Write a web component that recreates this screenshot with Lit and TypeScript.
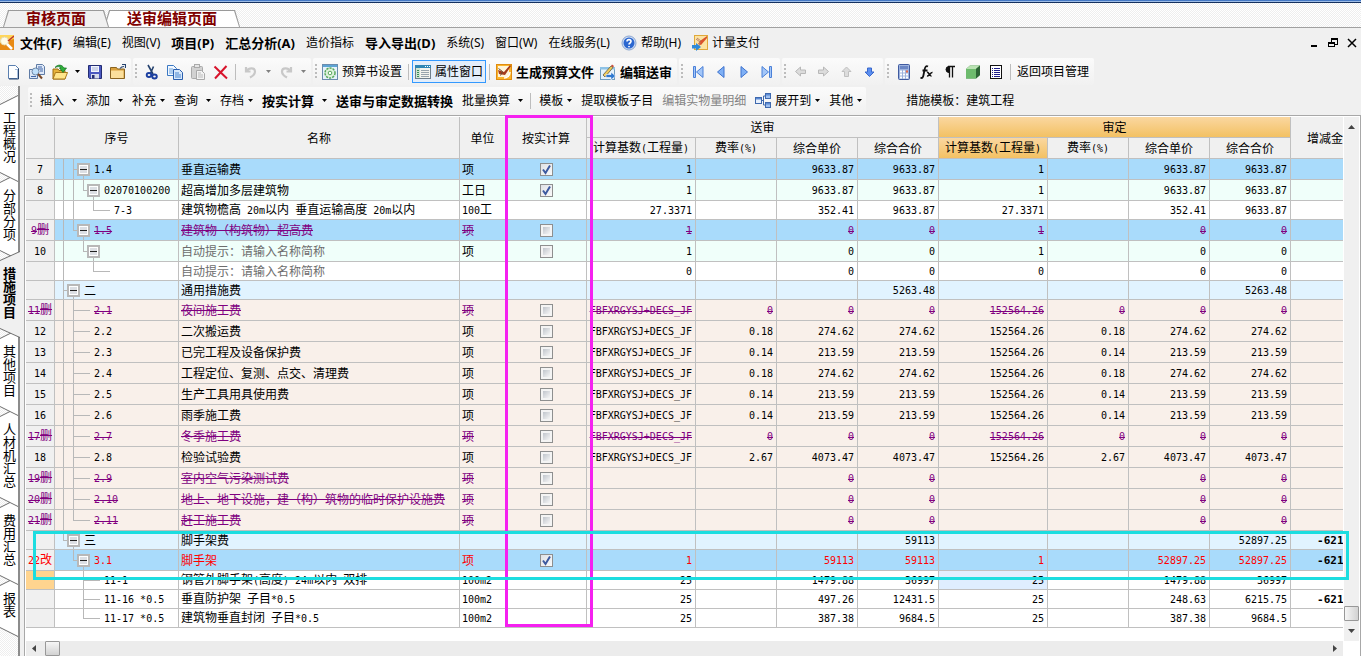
import { LitElement, html, css, svg, nothing } from "lit";
import type { TemplateResult, SVGTemplateResult } from "lit";
import { customElement } from "lit/decorators.js";
import { classMap } from "lit/directives/class-map.js";

/* ---------- icons, all on a 16 x 16 grid ---------- */
const ICONS: Record<string, SVGTemplateResult> = {
  app: svg`<rect x="0" y="0" width="16" height="15" fill="#f0a21c"/><path d="M0 9L16 3V15H0z" fill="#e88a14"/><path d="M0 0h16v4L0 8z" fill="#ffd65a"/><circle cx="6.500" cy="6" r="4" fill="#fffbe6" stroke="#e4d9b0"/><path d="M9 9l5 5" stroke="#fff" stroke-width="2.500"/><path d="M10 6l6-5" stroke="#c0392b" stroke-width="1.500"/>`,
  doc: svg`<path d="M2.500 1.500h7l3 3v10h-10z" fill="#fdfeff" stroke="#5a7fb0"/><path d="M9 1v4h4v10h-2V6H9z" fill="#a9c0de"/><path d="M12.500 4.500v10.500H3" fill="none" stroke="#27446f"/>`,
  find: svg`<path d="M7.500 .500h6l2 2v8h-8z" fill="#dfe9f8" stroke="#5f7ba5"/><path d="M9 3h4M9 5h5M11 7h3" stroke="#3f65a8"/><path d="M.500 5.500h8v9h-8z" fill="#dbe7f7" stroke="#5f7ba5"/><path d="M2 12.500h5" stroke="#3f65a8"/><circle cx="6.500" cy="7.500" r="3.500" fill="#bfe0fb" stroke="#6f88a8"/><path d="M9 10l4 4.500" stroke="#7a4a2a" stroke-width="2"/>`,
  open: svg`<path d="M1 5h5l1 1.500h6V15H1z" fill="#e6b23a" stroke="#9a6c12"/><path d="M3.500 8.500H15.500L13 15H1z" fill="#ffe58a" stroke="#a9781a"/><path d="M3 3.500C6 0 10 .500 12 4h2.500L11 8.500 7.500 4H9C8 2.500 6 2 3 3.500z" fill="#2fae3a" stroke="#137022" stroke-width=".7"/>`,
  save: svg`<path d="M1.500 1.500h13v13h-12l-1-1z" fill="#4a58c0" stroke="#232c72"/><rect x="4" y="2" width="8" height="6" fill="#f2f5fd"/><path d="M5 4h6M5 6h6" stroke="#a9b3d6"/><rect x="4" y="10" width="8" height="4.500" fill="#d5daea"/><rect x="5" y="11" width="2.500" height="3.500" fill="#232c72"/>`,
  folder: svg`<path d="M.500 3.500h6l1 1.500h7v9.500h-14z" fill="#d9a03c" stroke="#8a6420"/><path d="M1 6.500h12.500V14H1z" fill="#fbdf9c"/><path d="M10 4.500c1-1.500 2-2 4-2M12 .500h3.500V4" fill="none" stroke="#27446f" stroke-width="1.200"/>`,
  cut: svg`<path d="M4 1l5 9M9.500 2.500L6.500 9.500" stroke="#26436f" stroke-width="1.600"/><ellipse cx="5" cy="11" rx="2.300" ry="2" fill="none" stroke="#1b3fa0" stroke-width="1.900"/><ellipse cx="10.500" cy="12.500" rx="2.300" ry="2" fill="none" stroke="#1b3fa0" stroke-width="1.900"/>`,
  copy: svg`<path d="M.500 1.500h6l3 3v7h-9z" fill="#f2f8ff" stroke="#3a78c3"/><path d="M2 5h4M2 7h4M2 9h4" stroke="#6ba1dc"/><path d="M6.500 5.500h6l3 3v7h-9z" fill="#d6e8fb" stroke="#2a5fae"/><path d="M8 9h4M8 11h6M8 13h6" stroke="#4a86cf"/>`,
  paste: svg`<rect x="1.500" y="2.500" width="11" height="12" rx="1" fill="#d2d2d2" stroke="#aaa"/><rect x="4.500" y=".500" width="5" height="3" fill="#e6e6e6" stroke="#aaa"/><path d="M6.500 6.500h5l3 3v6h-8z" fill="#f3f3f3" stroke="#aaa"/><path d="M8 9h3M8 11h5M8 13h5" stroke="#bbb"/>`,
  del: svg`<path d="M1.500 2.500L14 14.500M13.500 2L2 14.500" stroke="#d8142c" stroke-width="2" fill="none"/>`,
  undo: svg`<path d="M3 3v4.500h4.500M3.500 7C6 3.500 12 3.500 12 7.500c0 2.500-2 4.500-5 6" fill="none" stroke="#c8c8c8" stroke-width="2.200"/>`,
  redo: svg`<path d="M13 3v4.500H8.500M12.500 7C10 3.500 4 3.500 4 7.500c0 2.500 2 4.500 5 6" fill="none" stroke="#c8c8c8" stroke-width="2.200"/>`,
  gear: svg`<rect x=".500" y=".500" width="15" height="15" fill="#e6f2fb" stroke="#6b8cae"/><rect x="1" y="1" width="14" height="2" fill="#5da4d4"/><circle cx="8" cy="9" r="5" fill="#dff2dd" stroke="#58a85c" stroke-width="1.500" stroke-dasharray="2.200 1"/><circle cx="8" cy="9" r="1.800" fill="#fff" stroke="#58a85c"/>`,
  panel: svg`<rect x=".500" y="1.500" width="15" height="13" fill="#f3f3ee" stroke="#6f7f8c"/><rect x="0" y="1" width="16" height="3" fill="#2f86b5"/><path d="M10 2.500h1M12 2.500h1M14 2.500h1" stroke="#fff"/><rect x="1" y="4" width="4" height="10" fill="#cfe6d2"/><path d="M2 6.500h2M2 8.500h2M2 10.500h2M2 12.500h2" stroke="#3b8a58"/><path d="M6 6.500h8M6 8.500h8M6 10.500h8M6 12.500h8" stroke="#98a4ad"/>`,
  make: svg`<rect x=".500" y=".500" width="15" height="15" fill="#fbb52c" stroke="#e08c10"/><rect x="2" y="2" width="11" height="11" fill="#fff4d8"/><path d="M2 6l6 2 6-7 1 1-6 9-6-1z" fill="#a43b1c"/><path d="M2.500 4.500l4 3-2 4" fill="none" stroke="#6a4b32"/><path d="M8 14c3 0 6-2 6-6" fill="none" stroke="#fff" stroke-width="1.500"/>`,
  edit: svg`<rect x=".500" y="3.500" width="14" height="12" fill="#e5f3fb" stroke="#6f9dbf"/><rect x="0" y="3" width="15" height="2.500" fill="#8fc3e6"/><path d="M3 11L11 2l2 1.500L5 13z" fill="#f0cc5a" stroke="#5c5c46" stroke-width=".800"/><path d="M11 2l1-1.500 2 1.500-1 1.500z" fill="#c94a3a"/><path d="M6 10.500h5V8l4.500 4-4.500 4v-2.500H6z" fill="#2f7ad0" stroke="#fff" stroke-width=".600"/>`,
  first: svg`<path d="M3.500 2.500h2v11h-2zM13 2.500v11L6.500 8z" fill="#a3c6f8" stroke="#4a80d8"/>`,
  prev: svg`<path d="M11 2.500v11L4.500 8z" fill="#7fb0f5" stroke="#3c72cf"/>`,
  next: svg`<path d="M5 2.500v11L11.500 8z" fill="#7fb0f5" stroke="#3c72cf"/>`,
  last: svg`<path d="M10.500 2.500h2v11h-2zM3 2.500v11L9.500 8z" fill="#a3c6f8" stroke="#4a80d8"/>`,
  left: svg`<path d="M2.500 7.500L7.500 3v3h5v3.500h-5V12z" fill="#dcdcdc" stroke="#b8b8b8"/>`,
  right: svg`<path d="M12.500 7.500L7.500 3v3h-5v3.500h5V12z" fill="#dcdcdc" stroke="#b8b8b8"/>`,
  up: svg`<path d="M7.500 3L12 7.500H9.500v5h-4v-5H3z" fill="#dcdcdc" stroke="#c0c0c0"/>`,
  down: svg`<path d="M7.500 12.500L3 8h2.500V4h4v4H12z" fill="#5b8ff0" stroke="#3a68cc"/>`,
  calc: svg`<rect x="2.500" y=".500" width="11" height="15" rx="1" fill="#9db2dd" stroke="#3f5aa0"/><rect x="4" y="2" width="8" height="3" fill="#6a86c4"/><path d="M4 7.500h2M7 7.500h2M4 10.500h2M7 10.500h2M10 10.500h2M4 13.500h2M7 13.500h2M10 13.500h2" stroke="#fff" stroke-width="2"/><path d="M10 7.500h2" stroke="#e66a4a" stroke-width="2"/>`,
  fx: svg`<path d="M9 2.500C7 1.500 6 3 5.500 6L4.500 11c-.500 3-1.500 3.500-3 2.500M3.500 6.500h5" fill="none" stroke="#111" stroke-width="1.800"/><path d="M8 8.500c2-1 2 4 4.500 3.500M13.500 8.500c-2-.500-3 4-5.500 3.500" fill="none" stroke="#111" stroke-width="1.600"/>`,
  para: svg`<path d="M7 2.500a3 3 0 000 6z" fill="#111" stroke="#111"/><path d="M7.500 2v11.500M10.500 2v11.500M6 2.500h7" stroke="#111" stroke-width="1.300"/>`,
  cube: svg`<path d="M1 5l4-3.500h10V11l-4 3.500H1z" fill="#3f8a46"/><path d="M1 5l4-3.500h10L11 5z" fill="#b9e2b2"/><path d="M1 5h10v9.500H1z" fill="#6dbb6d"/><path d="M11 5l4-3.500V11l-4 3.500z" fill="#2c6535"/>`,
  list: svg`<g shape-rendering="crispEdges"><rect x="2.500" y="1.500" width="11" height="13" fill="#fff" stroke="#111"/><path d="M4 4.500h1M6 4.500h6M4 6.500h1M6 6.500h6M4 8.500h1M6 8.500h6M4 10.500h1M6 10.500h6M4 12.500h1M6 12.500h6" stroke="#20208c"/></g>`,
  help: svg`<circle cx="8" cy="8" r="7" fill="#cfdcf0" stroke="#8aa6d2"/><circle cx="8" cy="8" r="5.500" fill="#2a66d0"/><path d="M6 6.500C6 4 10 4 10 6.500 10 8 8 8 8 9.500M8 11v1.300" fill="none" stroke="#fff" stroke-width="1.600"/>`,
  pay: svg`<rect x="2.500" y=".500" width="13" height="14" fill="#fce3a2" stroke="#e0a93a"/><path d="M8 6L15 1v2l-6 7-3-1z" fill="#d9532c"/><path d="M4 4l4 3-1 4M5 3l4 3" fill="none" stroke="#b9826a"/><path d="M0 10h4V8l5 4-5 4v-2.500H0z" fill="#2f8ad8"/>`,
  expand: svg`<rect x=".500" y="4.500" width="6" height="6" fill="#e8f1fd" stroke="#3f69ae"/><rect x="1" y="5" width="5" height="1.500" fill="#5b8ad4"/><rect x="10.500" y=".500" width="5" height="5" fill="#9fc0f0" stroke="#3f69ae"/><rect x="11" y="1" width="4" height="1.500" fill="#5b8ad4"/><rect x="10.500" y="9.500" width="5" height="5" fill="#9fc0f0" stroke="#3f69ae"/><rect x="11" y="10" width="4" height="1.500" fill="#5b8ad4"/><path d="M7 7.500h1.500M8.500 3v9M8.500 3H10M8.500 12H10" fill="none" stroke="#3f69ae"/>`,
};

const icon = (name: string) =>
  html`<svg class="ico" viewBox="0 0 16 16" width="16" height="16" aria-hidden="true">${ICONS[name]}</svg>`;

const caret = html`<svg class="caret" viewBox="0 0 5 3" width="5" height="3" aria-hidden="true"><path d="M0 0h5L2.500 3z" fill="currentColor"/></svg>`;

/* Latin runs use a half-width face beside the full-width characters. */
const mixed = (text: string) =>
  text
    .split(/([\x20-\x7e]+)/)
    .map((part, i) => (part === "" ? nothing : html`<span class=${i % 2 ? "latin" : "han"}>${part}</span>`));

/* ---------- grid data ---------- */
interface Tree {
  full: number[];
  end?: number;
  from?: number;
  box?: number;
  leaf?: number;
  stem?: boolean;
}
interface Row {
  idx: string;
  code: string;
  name: string;
  unit: string;
  check?: boolean;
  sent: string[];
  fixed: string[];
  diff?: string;
  tone: string;
  state?: "gone" | "edited";
  hint?: boolean;
  current?: boolean;
  tree: Tree;
}

const COLS = [29, 124, 281, 46, 81, 109, 81, 81, 81, 109, 81, 81, 81, 81];
const SHORT_TONES = ["plain", "group"];
const FEE = "FBFXRGYSJ+DECS_JF";

const fee = (idx: string, code: string, name: string, rate: string, price: string, last = false): Row => {
  const gone = price === "0";
  return {
    idx: gone ? `${idx}删` : idx,
    code,
    name,
    unit: "项",
    check: false,
    sent: rate ? [FEE, rate, price, price] : ["", "", price, price],
    fixed: rate ? ["152564.26", rate, price, price] : ["", "", price, price],
    tone: "fee",
    state: gone ? "gone" : undefined,
    tree: last ? { full: [8], end: 18, from: 18, leaf: 35 } : { full: [8, 18], from: 18, leaf: 35 },
  };
};

const ROWS: Row[] = [
  { idx: "7", code: "1.4", name: "垂直运输费", unit: "项", check: true, sent: ["1", "", "9633.87", "9633.87"], fixed: ["1", "", "9633.87", "9633.87"], tone: "section", tree: { full: [8, 18], from: 18, box: 28, stem: true } },
  { idx: "8", code: "02070100200", name: "超高增加多层建筑物", unit: "工日", check: true, sent: ["1", "", "9633.87", "9633.87"], fixed: ["1", "", "9633.87", "9633.87"], tone: "mint", tree: { full: [8, 18], end: 28, from: 28, box: 38, stem: true } },
  { idx: "", code: "7-3", name: "建筑物檐高 20m以内 垂直运输高度 20m以内", unit: "100工", sent: ["27.3371", "", "352.41", "9633.87"], fixed: ["27.3371", "", "352.41", "9633.87"], tone: "plain", tree: { full: [8, 18], end: 38, from: 38, leaf: 55 } },
  { idx: "9删", code: "1.5", name: "建筑物（构筑物）超高费", unit: "项", check: false, sent: ["1", "", "0", "0"], fixed: ["1", "", "0", "0"], tone: "section", state: "gone", tree: { full: [8], end: 18, from: 18, box: 28, stem: true } },
  { idx: "10", code: "", name: "自动提示：请输入名称简称", unit: "项", check: false, sent: ["1", "", "0", "0"], fixed: ["1", "", "0", "0"], tone: "mint", hint: true, tree: { full: [8], end: 28, from: 28, box: 38, stem: true } },
  { idx: "", code: "", name: "自动提示：请输入名称简称", unit: "", sent: ["0", "", "0", "0"], fixed: ["0", "", "0", "0"], tone: "plain", hint: true, tree: { full: [8], end: 38, from: 38, leaf: 55 } },
  { idx: "", code: "二", name: "通用措施费", unit: "", sent: ["", "", "", "5263.48"], fixed: ["", "", "", "5263.48"], tone: "group", tree: { full: [8], from: 8, box: 18, stem: true } },
  fee("11", "2.1", "夜间施工费", "0", "0"),
  fee("12", "2.2", "二次搬运费", "0.18", "274.62"),
  fee("13", "2.3", "已完工程及设备保护费", "0.14", "213.59"),
  fee("14", "2.4", "工程定位、复测、点交、清理费", "0.18", "274.62"),
  fee("15", "2.5", "生产工具用具使用费", "0.14", "213.59"),
  fee("16", "2.6", "雨季施工费", "0.14", "213.59"),
  fee("17", "2.7", "冬季施工费", "0", "0"),
  fee("18", "2.8", "检验试验费", "2.67", "4073.47"),
  fee("19", "2.9", "室内空气污染测试费", "", "0"),
  fee("20", "2.10", "地上、地下设施，建（构）筑物的临时保护设施费", "", "0"),
  fee("21", "2.11", "赶工施工费", "", "0", true),
  { idx: "", code: "三", name: "脚手架费", unit: "", sent: ["", "", "", "59113"], fixed: ["", "", "", "52897.25"], diff: "-6215.75", tone: "group", tree: { full: [], end: 8, from: 8, box: 18, stem: true } },
  { idx: "22改", code: "3.1", name: "脚手架", unit: "项", check: true, sent: ["1", "", "59113", "59113"], fixed: ["1", "", "52897.25", "52897.25"], diff: "-6215.75", tone: "section", state: "edited", tree: { full: [], end: 18, from: 18, box: 28, stem: true } },
  { idx: "", code: "11-1", name: "钢管外脚手架(高度) 24m以内 双排", unit: "100m2", sent: ["25", "", "1479.88", "36997"], fixed: ["25", "", "1479.88", "36997"], tone: "plain", current: true, tree: { full: [28], from: 28, leaf: 45 } },
  { idx: "", code: "11-16 *0.5", name: "垂直防护架 子目*0.5", unit: "100m2", sent: ["25", "", "497.26", "12431.5"], fixed: ["25", "", "248.63", "6215.75"], diff: "-6215.75", tone: "plain", tree: { full: [28], from: 28, leaf: 45 } },
  { idx: "", code: "11-17 *0.5", name: "建筑物垂直封闭 子目*0.5", unit: "100m2", sent: ["25", "", "387.38", "9684.5"], fixed: ["25", "", "387.38", "9684.5"], tone: "plain", tree: { full: [], end: 28, from: 28, leaf: 45 } },
];

const SUB_HEADS = ["计算基数(工程量)", "费率(%)", "综合单价", "综合合价"];

@customElement("cost-grid")
export class CostGrid extends LitElement {
  static styles = css`
    :host {
      display: block;
      font: 12px/16px "Noto Sans CJK SC", sans-serif;
      color: #000;
    }
    table {
      width: 100%;
      min-width: 1346px;
      table-layout: fixed;
      border-collapse: separate;
      border-spacing: 0;
    }
    th,
    td {
      box-sizing: border-box;
      height: 21px;
      padding: 0;
      border-right: 1px solid #c0c0c0;
      border-bottom: 1px solid #c0c0c0;
      font-weight: normal;
      white-space: nowrap;
      overflow: hidden;
    }
    th {
      background: #f0f0f0;
      text-align: center;
    }
    th.hot {
      background: linear-gradient(#fad7a0, #f3c163);
    }
    .latin {
      font-family: "DejaVu Sans Mono", monospace;
      font-size: 10px;
      white-space: pre;
    }
    .short td,
    .short th {
      height: 19px;
    }
    .section td {
      background: #a9dbfb;
    }
    .mint td {
      background: #f0fffa;
    }
    .group td {
      background: #e1f3ff;
    }
    .fee td {
      background: #f9f0ea;
    }
    .plain td {
      background: #fff;
    }
    .gone td,
    .gone th {
      color: #800080;
    }
    .gone .latin,
    .gone .han {
      text-decoration: line-through;
    }
    .edited td,
    .edited th {
      color: #f00;
    }
    td.hint {
      color: #6d6d6d;
    }
    .current th {
      background: #ffd48f;
    }
    .current td.focus {
      background: #dfeeff;
    }
    td.left {
      padding-left: 2px;
    }
    td.num {
      padding-right: 3px;
      text-align: right;
    }
    td.check {
      text-align: center;
    }
    tbody td.diff {
      padding-right: 1px;
      text-align: right;
      color: #000;
    }
    .diff .latin {
      font-size: 11px;
      font-weight: bold;
    }
    .tree {
      display: flex;
      align-items: center;
    }
    .tree svg {
      display: block;
      flex: none;
    }
    .tree .cell-text {
      margin-left: 4px;
    }
    .toggle {
      border: 0;
      padding: 0;
      background: none;
      flex: none;
    }
    input {
      appearance: none;
      display: block;
      box-sizing: border-box;
      width: 13px;
      height: 13px;
      margin: 0 auto;
      border: 1px solid #8e8f8f;
      background: linear-gradient(135deg, #c0c5cc, #f6f6f6) center / 7px 7px no-repeat, #f4f4f4;
    }
    input:checked {
      background: url("data:image/svg+xml,%3Csvg xmlns='http://www.w3.org/2000/svg' viewBox='0 0 11 11'%3E%3Cpath d='M2 5.500L4.500 9L9 1.500' fill='none' stroke='%233c5aa0' stroke-width='2'/%3E%3C/svg%3E") center / 11px 11px no-repeat, linear-gradient(135deg, #dfe2e6, #fafafa);
    }
  `;

  private tree(row: Row, h: number) {
    const t = row.tree;
    const mid = Math.floor(h / 2);
    const stop = t.box !== undefined ? t.box - 6 : t.leaf!;
    let d = t.full.map((x) => `M${x + 0.5} 0V${h}`).join("");
    if (t.end !== undefined) d += `M${t.end + 0.5} 0V${mid + 0.5}`;
    d += `M${t.from! + 0.5} ${mid + 0.5}H${stop}`;
    return html`<div class="tree">
      <svg width=${stop} height=${h} shape-rendering="crispEdges" aria-hidden="true"><path d=${d} fill="none" stroke="#b8b8b8" /></svg>
      ${t.box !== undefined
        ? html`<button class="toggle" aria-label="折叠">
            <svg width="13" height=${h} shape-rendering="crispEdges">
              <path d="M6.500 ${mid + 6}V${h}" stroke="#b8b8b8" />
              <rect x="1" y=${mid - 5} width="11" height="11" fill="#fff" stroke="#b8b8b8" stroke-width="2" />
              <rect x="3" y=${mid - 3} width="7" height="7" fill="#dcdfe4" />
              <path d="M3 ${mid + 0.5}H10" stroke="#222" />
            </svg>
          </button>`
        : nothing}
      <span class="cell-text">${mixed(row.code)}</span>
    </div>`;
  }

  private nums(values: string[], focus: boolean) {
    return values.map(
      (v, i) => html`<td class=${classMap({ num: true, focus: focus && i === 0 })}>${mixed(v)}</td>`,
    );
  }

  private row(row: Row) {
    const short = SHORT_TONES.includes(row.tone);
    const classes = { [row.tone]: true, short, gone: row.state === "gone", edited: row.state === "edited", current: !!row.current };
    return html`<tr class=${classMap(classes)}>
      <th scope="row">${mixed(row.idx)}</th>
      <td>${this.tree(row, short ? 18 : 20)}</td>
      <td class=${classMap({ left: true, hint: !!row.hint })}>${mixed(row.name)}</td>
      <td class="left">${mixed(row.unit)}</td>
      <td class="check">
        ${row.check === undefined ? nothing : html`<input type="checkbox" aria-label="按实计算 ${row.name}" .checked=${row.check} />`}
      </td>
      ${this.nums(row.sent, false)} ${this.nums(row.fixed, true)}
      <td class="diff">${mixed(row.diff ?? "")}</td>
    </tr>`;
  }

  render() {
    return html`<table>
      <colgroup>
        ${COLS.map((w) => html`<col style="width:${w}px" />`)}
      </colgroup>
      <thead>
        <tr>
          <th rowspan="2"></th>
          <th rowspan="2">序号</th>
          <th rowspan="2">名称</th>
          <th rowspan="2">单位</th>
          <th rowspan="2">按实计算</th>
          <th colspan="4">送审</th>
          <th colspan="4" class="hot">审定</th>
          <th rowspan="2">增减金额</th>
        </tr>
        <tr>
          ${SUB_HEADS.map((t) => html`<th>${mixed(t)}</th>`)}
          ${SUB_HEADS.map((t, i) => html`<th class=${classMap({ hot: i === 0 })}>${mixed(t)}</th>`)}
        </tr>
      </thead>
      <tbody>
        ${ROWS.map((r) => this.row(r))}
      </tbody>
    </table>`;
  }
}

/* ---------- toolbars ---------- */
const ib = (name: string, label: string) => html`<button class="ib" aria-label=${label}>${icon(name)}</button>`;
const drop = (label: string, dim = false) =>
  html`<button class=${classMap({ drop: true, dim })} aria-label=${label}>${caret}</button>`;
const grip = html`<span class="grip"></span>`;
const sep = html`<span class="sep"></span>`;
const labelled = (name: string, label: string, cls = "") =>
  html`<button class="lb ${cls}">${icon(name)}<span>${label}</span></button>`;
const cmd = (label: string, opts: { bold?: boolean; caret?: "near" | "far"; icon?: string; off?: boolean } = {}): TemplateResult =>
  html`<button class=${classMap({ cmd: true, bold: !!opts.bold, far: opts.caret === "far" })} ?disabled=${!!opts.off}>
    ${opts.icon ? icon(opts.icon) : nothing}<span>${label}</span>${opts.caret ? caret : nothing}
  </button>`;

const MENU: { text: string; bold?: boolean; icon?: string }[] = [
  { text: "文件(F)", bold: true },
  { text: "编辑(E)" },
  { text: "视图(V)" },
  { text: "项目(P)", bold: true },
  { text: "汇总分析(A)", bold: true },
  { text: "造价指标" },
  { text: "导入导出(D)", bold: true },
  { text: "系统(S)" },
  { text: "窗口(W)" },
  { text: "在线服务(L)" },
  { text: "帮助(H)", icon: "help" },
  { text: "计量支付", icon: "pay" },
];

const RAIL = ["工程概况", "分部分项", "措施项目", "其他项目", "人材机汇总", "费用汇总", "报表"];

@customElement("app-root")
export class AppRoot extends LitElement {
  static styles = css`
    :host {
      display: flex;
      flex-direction: column;
      height: 100vh;
      overflow: hidden;
      background: #f0f0f0;
      color: #000;
      font: 12px/16px "Noto Sans", "Noto Sans CJK SC", sans-serif;
    }
    button {
      border: 0;
      padding: 0;
      margin: 0;
      background: none;
      color: inherit;
      font: inherit;
      white-space: nowrap;
    }
    svg {
      display: block;
      flex: none;
    }
    .title-edge {
      flex: none;
      height: 3px;
      background: linear-gradient(#4377c4 1px, #9dbce6 1px 2px, #14305f 2px);
    }
    .dots {
      background: repeating-conic-gradient(#ffffff 0 25%, #eeeeee 0 50%) 0 0 / 2px 2px;
    }
    .pages {
      flex: none;
      display: flex;
      align-items: flex-end;
      box-sizing: border-box;
      height: 25px;
      padding-left: 3px;
      border-bottom: 1px solid #a0a0a0;
    }
    .page {
      position: relative;
      isolation: isolate;
      height: 17px;
      padding: 0 23px;
      background: #9a9a9a;
      clip-path: polygon(5px 0, calc(100% - 5px) 0, 100% 100%, 0 100%);
      color: #800000;
      font-size: 15px;
      font-weight: bold;
      line-height: 17px;
    }
    .page::before {
      content: "";
      position: absolute;
      z-index: -1;
      inset: 1px 1px 0;
      background: #fff;
      clip-path: polygon(5px 0, calc(100% - 5px) 0, 100% 100%, 0 100%);
    }
    .page.on::before {
      background: #f0f0f0;
    }
    .page + .page {
      margin-left: -5px;
    }
    .page.on {
      z-index: 1;
    }
    .menu {
      flex: none;
      display: flex;
      align-items: center;
      gap: 11px;
      height: 30px;
    }
    .logo {
      margin-left: -2px;
      margin-right: -5px;
    }
    .item {
      display: flex;
      align-items: center;
      gap: 4px;
    }
    .bold {
      font-size: 13px;
      font-weight: bold;
    }
    .win {
      display: flex;
      align-items: center;
      gap: 9px;
      margin-left: auto;
      padding-right: 4px;
    }
    .bar {
      flex: none;
      display: flex;
      align-items: flex-start;
      gap: 2px;
      height: 28px;
    }
    .set {
      display: flex;
      align-items: center;
      height: 27px;
      padding-right: 2px;
      border-radius: 2px;
      background: linear-gradient(#fbfbfb, #f1f1f1);
    }
    .set.clip {
      margin-left: -5px;
    }
    .grip {
      width: 7px;
      height: 15px;
      background: linear-gradient(#bcbcbc, #bcbcbc) 2px 0 / 2px 2px no-repeat,
        linear-gradient(#bcbcbc, #bcbcbc) 2px 4px / 2px 2px no-repeat,
        linear-gradient(#bcbcbc, #bcbcbc) 2px 8px / 2px 2px no-repeat,
        linear-gradient(#bcbcbc, #bcbcbc) 2px 12px / 2px 2px no-repeat;
    }
    .sep {
      width: 1px;
      height: 16px;
      margin: 0 3px;
      background: #bdbdbd;
    }
    .ib {
      display: flex;
      justify-content: center;
      width: 23px;
    }
    .drop {
      display: flex;
      justify-content: center;
      align-items: center;
      width: 12px;
      height: 16px;
    }
    .dim {
      color: #808080;
    }
    .lb {
      display: flex;
      align-items: center;
      gap: 4px;
      height: 23px;
      padding: 0 2px;
      border: 1px solid transparent;
    }
    .set > .grip + .lb {
      margin-left: -1px;
    }
    .lb.on {
      border-color: #3399ff;
      background: #e4eefa;
    }
    .bar.second {
      height: 29px;
      align-items: center;
      padding-left: 4px;
    }
    .bar.second .set {
      padding-right: 0;
    }
    .cmd {
      display: flex;
      align-items: center;
      gap: 4px;
      height: 22px;
      padding: 0 4px 0 5px;
    }
    .cmd.far {
      gap: 8px;
    }
    .cmd:disabled {
      color: #838383;
    }
    .template {
      margin-left: 38px;
    }
    .body {
      position: relative;
      flex: 1;
      display: flex;
      min-height: 0;
    }
    .rail {
      flex: none;
      display: flex;
      flex-direction: column;
      align-items: flex-start;
      box-sizing: border-box;
      width: 20px;
      padding-top: 9px;
      border-right: 2px solid #8c8c8c;
    }
    .side {
      position: relative;
      isolation: isolate;
      flex: none;
      box-sizing: border-box;
      width: 18px;
      margin-bottom: -9px;
      padding: 16px 0 19px;
      background: #6e6e6e;
      clip-path: polygon(0 9px, 100% 0, 100% 100%, 0 calc(100% - 9px));
      font-family: "Noto Sans CJK SC", sans-serif;
      font-size: 13px;
      line-height: 18px;
      writing-mode: vertical-rl;
    }
    .side::before {
      content: "";
      position: absolute;
      z-index: -1;
      inset: 0;
      background: #fff;
      clip-path: polygon(0 10px, 100% 1px, 100% calc(100% - 1px), 0 calc(100% - 10px));
    }
    .side.on {
      width: 20px;
      padding-right: 2px;
      font-weight: bold;
    }
    .side.on::before {
      background: #f0f0f0;
    }
    .main {
      flex: 1;
      display: flex;
      flex-direction: column;
      min-width: 0;
      padding-left: 4px;
    }
    .frame {
      flex: 1;
      display: flex;
      flex-direction: column;
      min-height: 0;
      padding: 1px 1px 0;
      border: solid #a8a8a8;
      border-width: 1px 1px 0;
      background: #fff;
    }
    .view {
      flex: 1;
      display: flex;
      min-height: 0;
    }
    cost-grid {
      flex: 1;
      min-width: 0;
      overflow: hidden;
    }
    .vscroll {
      flex: none;
      display: flex;
      flex-direction: column;
      align-items: center;
      justify-content: space-between;
      width: 15px;
      padding: 8px 0;
      margin-left: 1px;
      background: #f0f0f0;
    }
    .vscroll .low {
      display: flex;
      flex-direction: column;
      align-items: center;
      gap: 8px;
    }
    .thumb {
      box-sizing: border-box;
      width: 15px;
      height: 15px;
      border: 1px solid #989898;
      border-radius: 1px;
      background: linear-gradient(90deg, #f6f6f6, #d2d2d2);
    }
    .hscroll {
      flex: none;
      display: flex;
      align-items: center;
      height: 15px;
      margin-right: 16px;
      padding: 0 6px;
      background: #ececec;
    }
    .hscroll .thumb {
      margin-left: 9px;
      margin-right: auto;
      background: linear-gradient(#f6f6f6, #d2d2d2);
    }
    .mark {
      position: absolute;
      box-sizing: border-box;
      pointer-events: none;
    }
    .mark.column {
      left: 505px;
      top: 29px;
      width: 88px;
      height: 512px;
      border: 3px solid #f520f0;
    }
    .mark.row {
      left: 33px;
      right: 12px;
      top: 445px;
      height: 49px;
      border: 3px solid #1cdde0;
    }
  `;

  render() {
    return html`
      <div class="title-edge"></div>
      <div class="pages dots">
        <button class="page on">审核页面</button>
        <button class="page">送审编辑页面</button>
      </div>
      <nav class="menu">
        <span class="logo">${icon("app")}</span>
        ${MENU.map(
          (m) => html`<button class=${classMap({ item: true, bold: !!m.bold })}>${m.icon ? icon(m.icon) : nothing}<span>${m.text}</span></button>`,
        )}
        <span class="win">
          <button aria-label="最小化"><svg width="10" height="10" shape-rendering="crispEdges"><path d="M2 8h6" stroke="#000" stroke-width="2" /></svg></button>
          <button aria-label="还原"><svg width="10" height="10" shape-rendering="crispEdges"><path d="M3 1h7M3.500 1v3M9.500 1v6M10 6.500H7M0 5h7M.500 4v5M6.500 4v5M0 8.500h7" fill="none" stroke="#000" /><path d="M3 1h7M0 5h7" stroke="#000" stroke-width="2" /></svg></button>
          <button aria-label="关闭"><svg width="10" height="10"><path d="M1 1l8 8M9 1L1 9" stroke="#000" stroke-width="1.500" /></svg></button>
        </span>
      </nav>
      <div class="bar">
        <div class="set clip">
          ${grip}${ib("doc", "新建")}${ib("find", "查找")}${ib("open", "打开")}${drop("打开选项")}${ib("save", "保存")}${ib("folder", "另存")}
        </div>
        <div class="set">
          ${grip}${ib("cut", "剪切")}${ib("copy", "复制")}${ib("paste", "粘贴")}${ib("del", "删除")}${sep}${ib("undo", "撤销")}${drop("撤销列表", true)}${ib("redo", "恢复")}${drop("恢复列表", true)}
        </div>
        <div class="set">
          ${grip}${labelled("gear", "预算书设置")}${sep}${labelled("panel", "属性窗口", "on")}${sep}${labelled("make", "生成预算文件", "bold")}${labelled("edit", "编辑送审", "bold")}
        </div>
        <div class="set">${grip}${ib("first", "首条")}${ib("prev", "上一条")}${ib("next", "下一条")}${ib("last", "末条")}</div>
        <div class="set">${grip}${ib("left", "左移")}${ib("right", "右移")}${ib("up", "上移")}${ib("down", "下移")}</div>
        <div class="set">
          ${grip}${ib("calc", "计算器")}${ib("fx", "函数")}${ib("para", "段落")}${ib("cube", "图形")}${ib("list", "清单")}${sep}
          <button class="lb">返回项目管理</button>
        </div>
      </div>
      <div class="body">
        <nav class="rail dots">
          ${RAIL.map((t, i) => {
            const on = i === 2;
            return html`<button class=${classMap({ side: true, on })} style="z-index:${on ? RAIL.length + 1 : RAIL.length - i}">${t}</button>`;
          })}
        </nav>
        <main class="main">
          <div class="bar second">
            <div class="set">
              ${grip}${cmd("插入", { caret: "far" })}${cmd("添加", { caret: "far" })}${cmd("补充", { caret: "near" })}${cmd("查询", { caret: "far" })}${cmd("存档", { caret: "near" })}${cmd("按实计算", { bold: true, caret: "far" })}${cmd("送审与审定数据转换", { bold: true })}${cmd("批量换算", { caret: "far" })}${sep}${cmd("模板", { caret: "near" })}${cmd("提取模板子目")}${cmd("编辑实物量明细", { off: true })}${cmd("展开到", { icon: "expand", caret: "near" })}${cmd("其他", { caret: "near" })}
            </div>
            <span class="template">措施模板：建筑工程</span>
          </div>
          <div class="frame">
            <div class="view">
              <cost-grid></cost-grid>
              <div class="vscroll">
                <button aria-label="向上滚动"><svg width="7" height="4"><path d="M0 4h7L3.500 0z" fill="#444" /></svg></button>
                <div class="low">
                  <div class="thumb"></div>
                  <button aria-label="向下滚动"><svg width="7" height="4"><path d="M0 0h7L3.500 4z" fill="#444" /></svg></button>
                </div>
              </div>
            </div>
            <div class="hscroll">
              <button aria-label="向左滚动"><svg width="4" height="7"><path d="M4 0v7L0 3.500z" fill="#444" /></svg></button>
              <div class="thumb"></div>
              <button aria-label="向右滚动"><svg width="4" height="7"><path d="M0 0v7l4-3.500z" fill="#444" /></svg></button>
            </div>
          </div>
        </main>
        <div class="mark column"></div>
        <div class="mark row"></div>
      </div>
    `;
  }
}
